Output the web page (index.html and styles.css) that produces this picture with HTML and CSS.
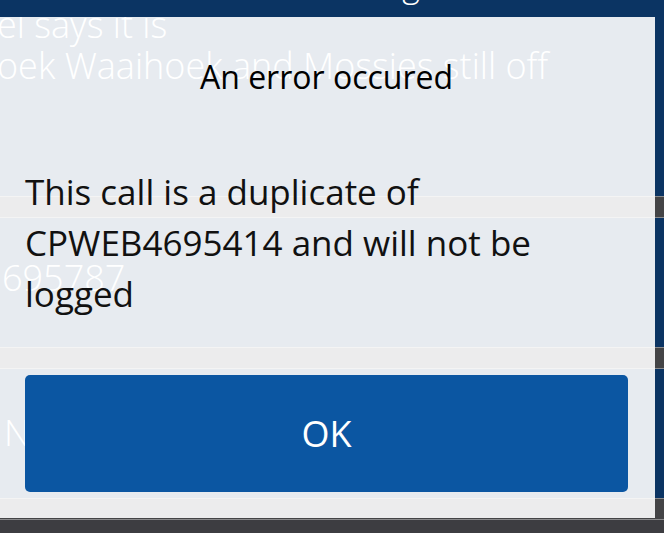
FILE: index.html
```html
<!DOCTYPE html>
<html lang="en">
<head>
  <meta charset="UTF-8">
  <meta name="viewport" content="width=device-width, initial-scale=1.0">
  <title>Calls</title>
  <link rel="stylesheet" href="styles.css">
</head>
<body>
  <!-- page behind the dialog -->
  <div class="page">
    <div class="header"><span>Power restored this morning</span></div>
    <div class="list">
      <div class="item first">
        <p class="line top">el says it is</p>
        <p class="line">oek Waaihoek and Mossies still off</p>
      </div>
      <div class="sep"></div>
      <div class="item">
        <p class="line num">695787</p>
      </div>
      <div class="sep"></div>
      <div class="item">
        <p class="line low">N</p>
      </div>
      <div class="sep"></div>
      <div class="footer"></div>
    </div>
  </div>

  <!-- Error dialog -->
  <div class="dialog">
    <h1 class="dialog-title">An error occured</h1>
    <p class="dialog-msg">This call is a duplicate of CPWEB4695414 and will not be logged</p>
    <button type="button" class="btn">OK</button>
  </div>
</body>
</html>
```

FILE: styles.css
```css
* {
  margin: 0;
  padding: 0;
  box-sizing: border-box;
}

body {
  width: 664px;
  height: 533px;
  overflow: hidden;
  background: #0b3463;
  font-family: 'Open Sans', sans-serif;
  position: relative;
}

.page {
  color: #ffffff;
  font-weight: 300;
}

.header {
  height: 17px;
  overflow: hidden;
}

.header span {
  display: flex;
  justify-content: flex-end;
  width: 420px;
  white-space: nowrap;
  font-size: 34px;
  line-height: 34px;
  margin-top: -33px;
}

.list {
  height: 516px;
  overflow: hidden;
}

.item {
  display: flow-root;
  height: 129px;
}

.item.first {
  height: 179px;
}

.line {
  font-size: 36px;
  line-height: 41px;
  white-space: nowrap;
  margin-left: -3px;
}

.top {
  margin-top: -13px;
}

.num {
  padding-top: 39px;
  margin-left: 2px;
}

.low {
  padding-top: 43px;
  margin-left: 4px;
}

.sep {
  height: 22px;
  background: #444446;
  border-top: 1px solid #8a8a8c;
  border-bottom: 1px solid #8a8a8c;
}

.footer {
  height: 40px;
  background: #3d3d41;
}

/* dialog on top of the list */
.dialog {
  position: absolute;
  top: 17px;
  left: 0;
  width: 655px;
  height: 501px;
  background: rgba(255, 255, 255, 0.9);
  padding: 0 27px 26px 25px;
  display: flex;
  flex-direction: column;
}

.dialog-title {
  font-size: 32px;
  font-weight: 400;
  color: #000;
  text-align: center;
  line-height: 40px;
  margin-top: 40px;
}

.dialog-msg {
  font-size: 35px;
  color: #111;
  line-height: 51px;
  margin-top: 69px;
  padding-right: 60px;
}

.btn {
  margin-top: auto;
  height: 117px;
  width: 100%;
  border: none;
  border-radius: 5px;
  background: #0b56a2;
  color: #ffffff;
  font-family: 'Open Sans', sans-serif;
  font-size: 36px;
}
```
